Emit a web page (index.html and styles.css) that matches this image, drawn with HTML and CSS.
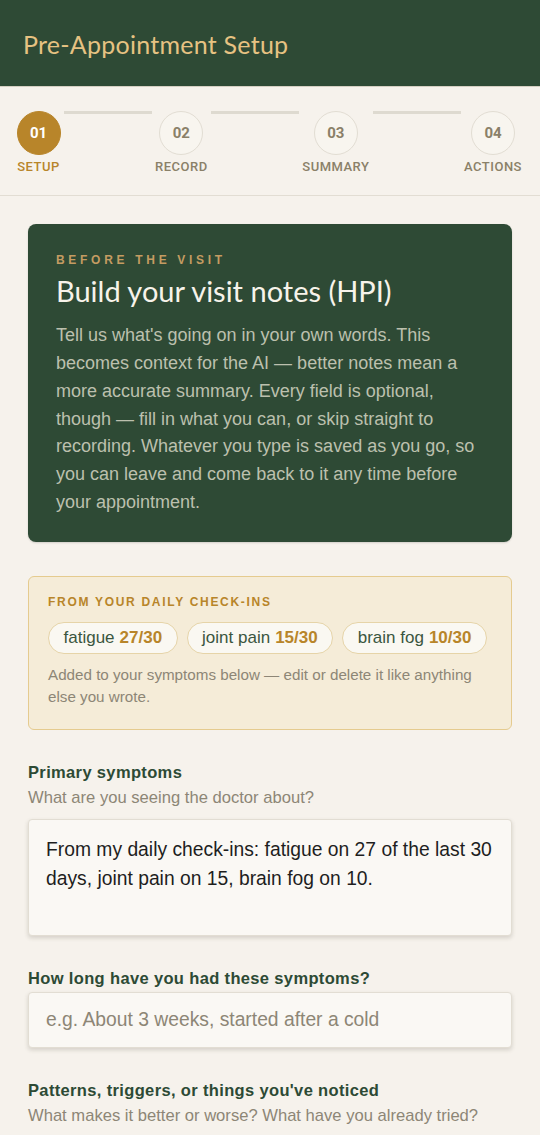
FILE: index.html
```html
<!DOCTYPE html>
<html lang="en">
<head>
<meta charset="utf-8">
<title>Pre-Appointment Setup</title>
<link rel="stylesheet" href="styles.css">
</head>
<body>
<header class="topbar">
  <h1 class="topbar-title">Pre-Appointment Setup</h1>
</header>
<nav class="stepper">
  <div class="step step-active">
    <div class="step-circle">01</div>
    <div class="step-label">Setup</div>
  </div>
  <div class="step-line"></div>
  <div class="step">
    <div class="step-circle">02</div>
    <div class="step-label">Record</div>
  </div>
  <div class="step-line"></div>
  <div class="step">
    <div class="step-circle">03</div>
    <div class="step-label">Summary</div>
  </div>
  <div class="step-line"></div>
  <div class="step">
    <div class="step-circle">04</div>
    <div class="step-label">Actions</div>
  </div>
</nav>
<main class="content">
  <section class="intro-card">
    <div class="intro-eyebrow">Before the visit</div>
    <h2 class="intro-title">Build your visit notes (HPI)</h2>
    <p class="intro-text">Tell us what's going on in your own words. This becomes context for the AI — better notes mean a more accurate summary. Every field is optional, though — fill in what you can, or skip straight to recording. Whatever you type is saved as you go, so you can leave and come back to it any time before your appointment.</p>
  </section>

  <section class="checkins">
    <div class="checkins-eyebrow">From your daily check-ins</div>
    <div class="chips">
      <span class="chip">fatigue <b class="chip-num">27/30</b></span>
      <span class="chip">joint pain <b class="chip-num">15/30</b></span>
      <span class="chip">brain fog <b class="chip-num">10/30</b></span>
    </div>
    <p class="checkins-note">Added to your symptoms below — edit or delete it like anything else you wrote.</p>
  </section>

  <div class="field">
    <label class="field-label">Primary symptoms</label>
    <div class="field-hint">What are you seeing the doctor about?</div>
    <div class="textarea">From my daily check-ins: fatigue on 27 of the last 30 days, joint pain on 15, brain fog on 10.</div>
  </div>

  <div class="field">
    <label class="field-label">How long have you had these symptoms?</label>
    <div class="input placeholder">e.g. About 3 weeks, started after a cold</div>
  </div>

  <div class="field">
    <label class="field-label">Patterns, triggers, or things you've noticed</label>
    <div class="field-hint">What makes it better or worse? What have you already tried?</div>
  </div>
</main>
</body>
</html>
```
FILE: styles.css
```css
* { box-sizing: border-box; }
html, body { margin: 0; padding: 0; }
body {
  background: #f6f2ec;
  font-family: "Liberation Sans", Arial, sans-serif;
  color: #2d4a35;
  width: 540px;
  overflow: hidden;
}
.topbar {
  background: #2e4a35;
  height: 87px;
  display: flex;
  align-items: center;
  padding: 0 23px;
  border-bottom: 1px solid #d4cfc2;
}
.topbar-title {
  margin: 0;
  font-family: Lato, "Open Sans", sans-serif;
  font-weight: 400;
  font-size: 25px;
  color: #e6c282;
  letter-spacing: 0.25px;
  padding-top: 2px;
}
.stepper {
  display: flex;
  align-items: flex-start;
  padding: 24px 18px 21px 16.5px;
  border-bottom: 1.5px solid #e2ddd3;
}
.step {
  display: flex;
  flex-direction: column;
  align-items: center;
}
.step-circle {
  width: 44px;
  height: 44px;
  border-radius: 50%;
  border: 1.5px solid #e2ddd3;
  background: #f8f5ef;
  display: flex;
  align-items: center;
  justify-content: center;
  font-family: Roboto, "Liberation Sans", sans-serif;
  font-weight: 700;
  font-size: 15px;
  color: #8a8068;
}
.step-active .step-circle {
  background: #b8852a;
  border-color: #b8852a;
  color: #ffffff;
}
.step-label {
  margin-top: 4px;
  font-family: Roboto, "Liberation Sans", sans-serif;
  font-size: 13px;
  letter-spacing: 0.5px;
  text-transform: uppercase;
  color: #8a8068;
  font-weight: 500;
}
.step-active .step-label { color: #b8852a; }
.step-line {
  flex: 1;
  height: 2.5px;
  background: #dedad0;
  margin: 0 3.5px;
}
.content {
  padding: 28px 28px 0;
}
.intro-card {
  background: #2e4a35;
  border-radius: 8px;
  padding: 29px 28px 25px;
  box-shadow: 0 1px 2px rgba(0,0,0,0.15);
}
.intro-eyebrow {
  font-size: 12px;
  letter-spacing: 3.7px;
  text-transform: uppercase;
  color: #c49c62;
  font-weight: 700;
}
.intro-title {
  margin: 6px 0 13px;
  font-family: Lato, "Open Sans", sans-serif;
  font-weight: 400;
  font-size: 29px;
  line-height: 1.25;
  color: #f7f3ea;
}
.intro-text {
  margin: 0;
  font-size: 18px;
  line-height: 27.8px;
  color: #bcc0ae;
}
.checkins {
  margin-top: 34px;
  background: #f5ecd8;
  border: 1.5px solid #e5cb8f;
  border-radius: 6px;
  padding: 18px 19px 21px;
}
.checkins-eyebrow {
  font-size: 12px;
  font-weight: 700;
  letter-spacing: 1.7px;
  text-transform: uppercase;
  color: #b8852a;
}
.chips {
  display: flex;
  gap: 9px;
  margin-top: 13px;
}
.chip {
  display: inline-flex;
  align-items: center;
  height: 32px;
  padding: 0 14.5px;
  border-radius: 17px;
  background: #faf8f2;
  border: 1.5px solid #e6d4a8;
  font-size: 17px;
  color: #3a5640;
}
.chip-num {
  margin-left: 5px;
  color: #b8852a;
  font-weight: 700;
}
.checkins-note {
  margin: 10px 0 0;
  font-size: 15.2px;
  line-height: 22px;
  color: #8d8676;
}
.field {
  margin-top: 33px;
}
.field + .field { margin-top: 33px; }
.field-label {
  display: block;
  font-size: 16.5px;
  font-weight: 700;
  color: #2d4a35;
  letter-spacing: 0.35px;
}
.field-hint {
  margin-top: 6px;
  font-size: 16.6px;
  color: #8d8676;
}
.textarea {
  margin-top: 11px;
  height: 117px;
  background: #faf8f4;
  border: 1.5px solid #e2ddd3;
  border-radius: 4px;
  padding: 16.5px 17px;
  font-size: 19.3px;
  line-height: 28.3px;
  color: #1e1e1e;
  box-shadow: 0 2px 4px rgba(60,55,40,0.18);
}
.input {
  margin-top: 4px;
  height: 56px;
  background: #faf8f4;
  border: 1.5px solid #e2ddd3;
  border-radius: 4px;
  padding: 0 17px;
  display: flex;
  align-items: center;
  font-size: 19.3px;
  box-shadow: 0 2px 4px rgba(60,55,40,0.18);
}
.placeholder { color: #8d8676; }
```
